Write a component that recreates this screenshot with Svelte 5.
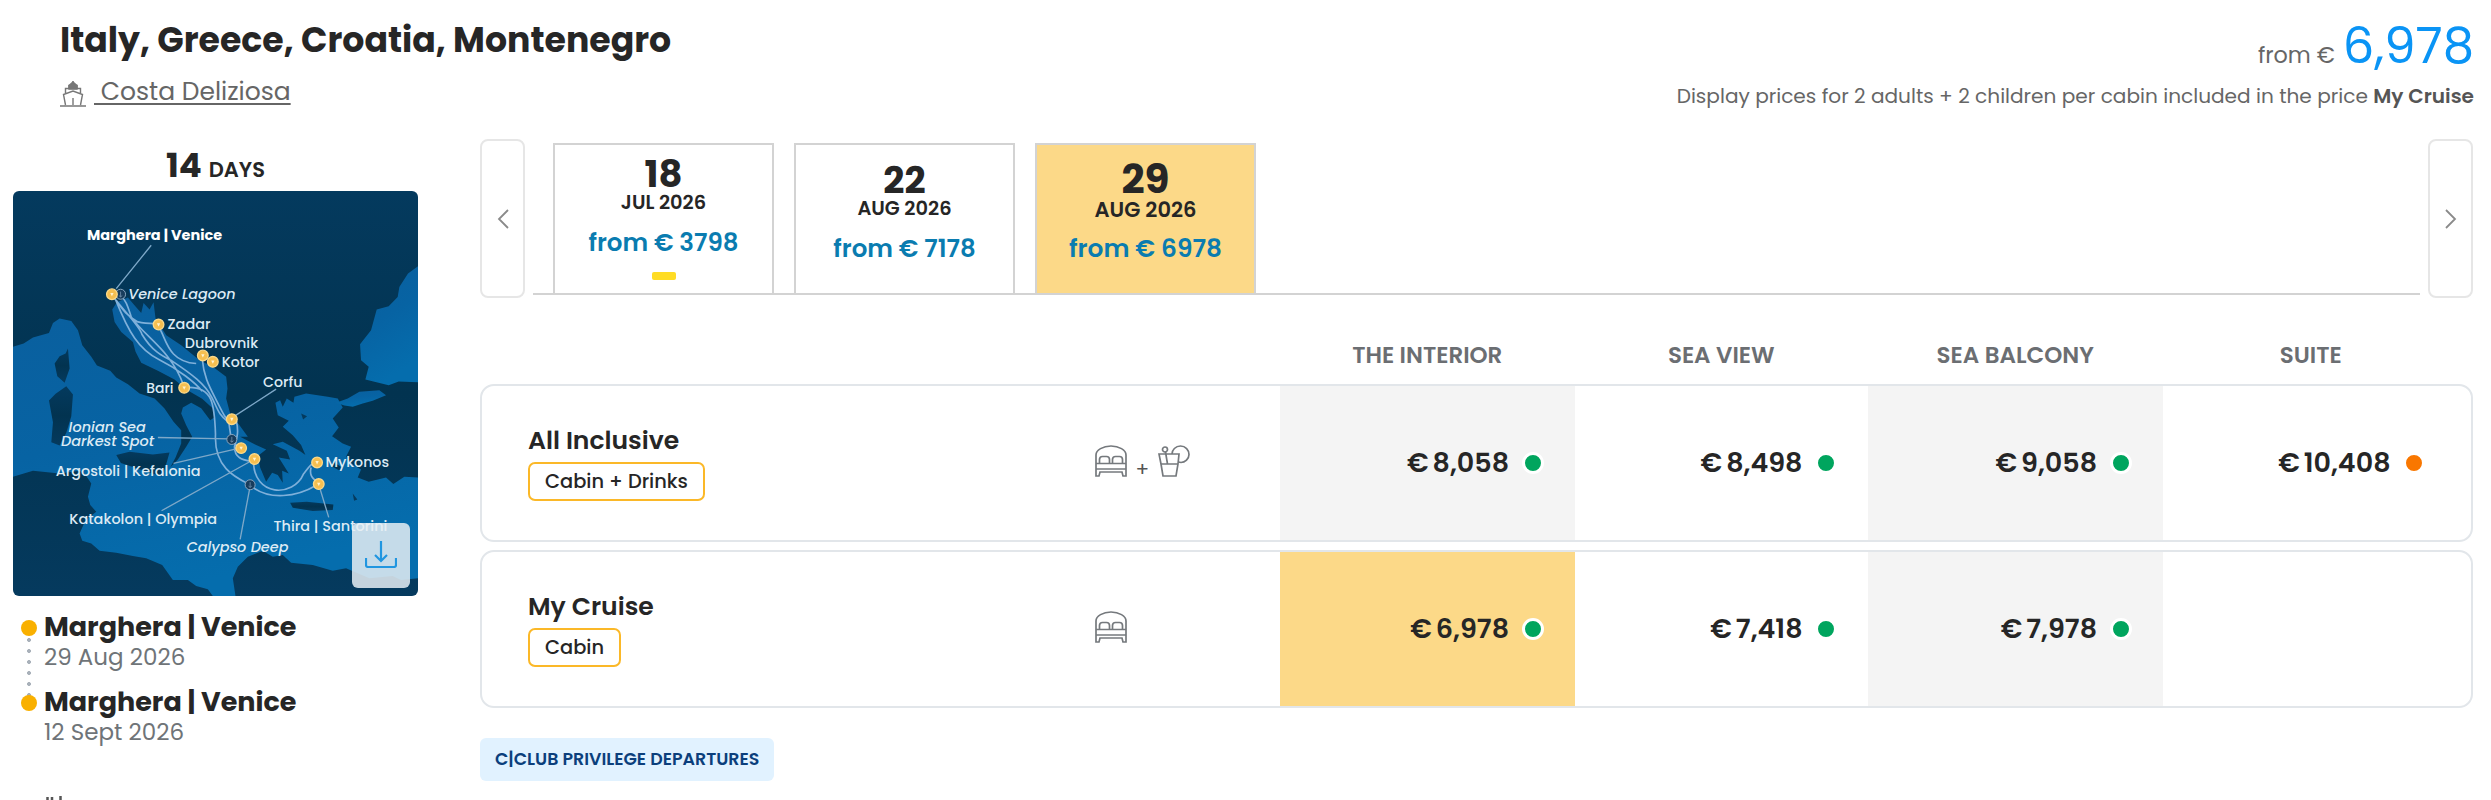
<script lang="ts">
	type Price = { amount: string; status: 'high' | 'low'; selected?: boolean } | null;

	const dates = [
		{ day: '18', month: 'JUL 2026', price: 'from € 3798', promo: true },
		{ day: '22', month: 'AUG 2026', price: 'from € 7178' },
		{ day: '29', month: 'AUG 2026', price: 'from € 6978', selected: true },
	];

	const categories = ['THE INTERIOR', 'SEA VIEW', 'SEA BALCONY', 'SUITE'];

	const fares: { name: string; badge: string; drinks?: boolean; prices: Price[] }[] = [
		{
			name: 'All Inclusive',
			badge: 'Cabin + Drinks',
			drinks: true,
			prices: [
				{ amount: '8,058', status: 'high' },
				{ amount: '8,498', status: 'high' },
				{ amount: '9,058', status: 'high' },
				{ amount: '10,408', status: 'low' },
			],
		},
		{
			name: 'My Cruise',
			badge: 'Cabin',
			prices: [
				{ amount: '6,978', status: 'high', selected: true },
				{ amount: '7,418', status: 'high' },
				{ amount: '7,978', status: 'high' },
				null,
			],
		},
	];

	const stops = [
		{ port: 'Marghera | Venice', date: '29 Aug 2026' },
		{ port: 'Marghera | Venice', date: '12 Sept 2026' },
	];

	const labels = [
		{ text: 'Marghera | Venice', x: 262, y: 179, w: 406, kind: 'bold' },
		{ text: 'Venice Lagoon', x: 386, y: 355, w: 322, kind: 'sea' },
		{ text: 'Zadar', x: 504, y: 446, w: 129 },
		{ text: 'Dubrovnik', x: 556, y: 504, w: 220 },
		{ text: 'Kotor', x: 667, y: 559, w: 113 },
		{ text: 'Bari', x: 440, y: 638, w: 82 },
		{ text: 'Corfu', x: 791, y: 621, w: 118 },
		{ text: 'Ionian Sea', x: 207, y: 755, w: 232, kind: 'sea' },
		{ text: 'Darkest Spot', x: 184, y: 799, w: 280, kind: 'sea' },
		{ text: 'Argostoli | Kefalonia', x: 168, y: 888, w: 435 },
		{ text: 'Mykonos', x: 978, y: 860, w: 191 },
		{ text: 'Katakolon | Olympia', x: 209, y: 1033, w: 444 },
		{ text: 'Thira | Santorini', x: 822, y: 1052, w: 342 },
		{ text: 'Calypso Deep', x: 561, y: 1117, w: 306, kind: 'sea' },
	];

	const ports = [
		[337, 342],
		[477, 433],
		[610, 526],
		[640, 545],
		[554, 623],
		[697, 717],
		[725, 804],
		[765, 837],
		[953, 847],
		[958, 912],
	];

	const seaPoints = [
		[363, 342],
		[697, 778],
		[752, 914],
	];
</script>

{#snippet bed()}
	<svg class="icon" viewBox="0 0 32 32" width="32" height="32">
		<path d="M1 31V10C1 5 8 1 16 1s15 4 15 9v21h-3l-1-4H5l-1 4zM1 18.500h30M1 24h30M4.500 18.500v-4c0-2 1-3 3-3h4c2 0 3 1 3 3v4M17.500 18.500v-4c0-2 1-3 3-3h4c2 0 3 1 3 3v4" />
	</svg>
{/snippet}

{#snippet drink()}
	<svg class="icon" viewBox="0 0 32 32" width="32" height="32">
		<path d="M1 9h20l-1 10-2 12H5L3 19zM3 19h17M9.500 19l-2-12" />
		<circle cx="7" cy="4.500" r="2.500" />
		<path d="M14 9c0-4 3.500-8 8.500-8s8.500 4 8.500 8.500-4 8-8 8l-2.500-.5" />
	</svg>
{/snippet}

<div class="page">
	<header>
		<div class="heading">
			<h1>Italy, Greece, Croatia, Montenegro</h1>
			<div class="ship">
				<svg viewBox="0 0 26 26" width="26" height="26">
					<path d="M13 0v5M9 7V4.500h8V7M5.500 12V7.500h15V12M5.500 24 3.500 13.500 13 10l9.500 3.500L20.500 24M0 25h26M13 17v7" />
					<path class="fill" d="m13 1 4 3.500V8H9V4.500z" />
				</svg>
				<a href="#ship">&nbsp;Costa Deliziosa</a>
			</div>
		</div>
		<div class="total">
			<div class="from"><span>from €</span> <strong>6,978</strong></div>
			<p>Display prices for 2 adults + 2 children per cabin included in the price <b>My Cruise</b></p>
		</div>
	</header>

	<div class="content">
		<aside>
			<div class="days"><strong>14</strong> <span>DAYS</span></div>

			<div class="map">
				<svg viewBox="40 32 1216 1216" width="405" height="405">
					<defs>
						<linearGradient id="sea" x1="0" y1="0" x2="0.3" y2="1">
							<stop offset="0" stop-color="#0a5f9e" />
							<stop offset="0.5" stop-color="#0763a3" />
							<stop offset="1" stop-color="#056dad" />
						</linearGradient>
						<linearGradient id="land" x1="0" y1="0" x2="0" y2="1">
							<stop offset="0" stop-color="#043a5e" />
							<stop offset="0.5" stop-color="#023350" />
							<stop offset="1" stop-color="#053a5e" />
						</linearGradient>
					</defs>
					<rect x="40" y="32" width="1216" height="1216" fill="url(#land)" />
					<g fill="url(#sea)">
						<path
							d="M40 500L72 490L100 472L148 458L160 428L180 415L215 422L235 450L248 495L275 530L292 556L332 572
							L350 592L385 612L420 640L465 655L495 685L522 725L545 750L545 790L528 832L512 862L535 838L560 800L578 770
							L560 735L545 700L550 682L575 668L605 684L632 720L644 712L640 685L608 656L560 628L525 598L475 572L425 548
							L408 515L400 485L365 455L345 425L338 388L352 366L385 352L402 372L425 398L432 368L450 388L462 366L468 415
							L500 465L545 495L600 540L640 560L680 590L684 625L680 655L692 700L720 735L745 770L722 770L770 795L800 808
							L775 828L782 862L800 905L818 878L835 885L850 908L848 872L868 880L838 832L872 838L862 812L820 792L850 785
							L900 812L918 825L905 795L880 765L850 740L868 722L835 705L828 668L842 660L850 680L862 655L882 668L885 650
							L920 640L985 650L1015 655L1030 682L1000 715L1018 742L998 768L1030 790L1055 800L1040 830L1062 855L1085 868
							L1075 892L1108 905L1160 892L1182 912L1215 890L1256 892L1256 1195L1205 1200L1180 1188L1110 1195L1040 1165
							L1000 1172L940 1155L875 1148L850 1125L820 1130L790 1112L745 1130L715 1160L700 1195L708 1248L640 1248
							L625 1228L590 1218L565 1200L520 1200L488 1155L440 1135L400 1128L350 1118L300 1112L275 1090L248 1082L240 1060
							L258 1020L290 995L272 975L265 950L275 910L258 885L240 872L180 880L100 872L40 890z"
						/>
						<path d="M1256 258L1226 280L1200 320L1195 350L1168 378L1132 388L1115 450L1082 492L1085 540L1108 560L1098 598L1168 615L1198 604L1256 606z" />
						<path d="M1010 668L1045 655L1080 635L1140 630L1160 645L1120 662L1090 670L1060 680L1035 676z" />
					</g>
					<g fill="url(#land)">
						<path d="M205 505l5 60-15 43-22-20-8-38 15-22 18-8z" />
						<path d="M200 618l20 25-5 65-15 50-20 38-25-10 5-60-12-65 20-20z" />
						<path d="M350 825l40-10 70 8 50-6-12 42-12 30-50-16-72-24z" />
						<path d="M872 968l50-3 80 8-2 17-60 3-60-10z" />
						<path d="M1000 845l30 18-10 8-22-12zM905 700l18 8-12 10zM1060 940l14 18-10 4z" />
					</g>
					<g class="route">
						<path d="M342 352c50 60 80 90 85 110 30 50 60 65 90 80 60 40 100 70 120 110 20 40 20 50 45 70M365 350c15 10 20 30 30 60 40 60 120 100 157 205M350 360c20 30 35 50 65 65 20 5 40 5 50 5M480 445c20 30 25 100 110 105M608 535c5 60 25 90 50 140 15 30 20 40 35 50M560 622c80-5 85 50 88 140-5 100 60 130 100 150 60 55 150 35 200 5M710 720c10 40 0 60-5 80 0 40 35 40 55 45M762 842c0 110 120 110 150 40 15-20 25-35 40-35M935 862c-5 20 0 30 20 45M348 358c40 100 70 150 130 180 60 30 110 70 130 95M685 715c10 30 0 60 30 85" />
						<path class="pointer" d="M455 195L350 325M830 627L705 708M475 772l215 4M522 850l195-45M486 992l270-150M722 1078l30-160M988 1012l-28-92" />
					</g>
					{#each seaPoints as [x, y]}
						<circle cx={x} cy={y} r="15" fill="#173c5c" stroke="#88a5be" stroke-width="3" />
						<path d="M{x} {y - 8}v16M{x - 5} {y + 4}q5 8 10 0" fill="none" stroke="#88a5be" stroke-width="2" />
					{/each}
					{#each ports as [x, y]}
						<circle cx={x} cy={y} r="16" fill="#f6bf50" stroke="#fbd98a" stroke-width="4" />
						<path d="M{x - 5} {y - 4}h10l-5 10z" fill="#fff3d0" />
					{/each}
					{#each labels as l}
						<text class={l.kind} x={l.x} y={l.y} textLength={l.w} lengthAdjust="spacingAndGlyphs">{l.text}</text>
					{/each}
				</svg>
				<button class="download" aria-label="Download">
					<svg viewBox="0 0 32 28" width="32" height="28">
						<path d="M16 1v20M10 15l6 6 6-6M1 18v7c0 1.500.5 2 2 2h26c1.500 0 2-.5 2-2v-7" />
					</svg>
				</button>
			</div>

			<ol class="stops">
				{#each stops as stop}
					<li>
						<strong>{stop.port}</strong>
						<span>{stop.date}</span>
					</li>
				{/each}
			</ol>
			<svg class="more" viewBox="0 0 16 8" width="16" height="8">
				<path d="M1.500 1v7M6 1v7M14.500 0v8" />
			</svg>
		</aside>

		<main>
			<div class="selector">
				<button class="arrow" aria-label="Previous">
					<svg viewBox="0 0 12 20" width="12" height="20"><path d="M11 1L2 10l9 9" /></svg>
				</button>
				<div class="dates">
					{#each dates as d}
						<div class="date" class:selected={d.selected} class:promo={d.promo}>
							<strong>{d.day}</strong>
							<span class="month">{d.month}</span>
							<span class="price">{d.price}</span>
							{#if d.promo}<i></i>{/if}
						</div>
					{/each}
				</div>
				<button class="arrow" aria-label="Next">
					<svg viewBox="0 0 12 20" width="12" height="20"><path d="M1 1l9 9-9 9" /></svg>
				</button>
			</div>

			<div class="grid head">
				<span></span>
				{#each categories as category}
					<span>{category}</span>
				{/each}
			</div>

			{#each fares as fare}
				<div class="grid fare">
					<div class="info">
						<div class="name">
							<h2>{fare.name}</h2>
							<span class="badge">{fare.badge}</span>
						</div>
						<div class="includes">
							{@render bed()}
							{#if fare.drinks}
								<span>+</span>
								{@render drink()}
							{/if}
						</div>
					</div>
					{#each fare.prices as price}
						<div class="cell" class:selected={price?.selected}>
							{#if price}
								<span class="amount"><span>€</span>{price.amount}</span>
								<span class="dot {price.status}"></span>
							{/if}
						</div>
					{/each}
				</div>
			{/each}

			<div class="club">C|CLUB PRIVILEGE DEPARTURES</div>
		</main>
	</div>
</div>

<style>
	:global(body) {
		margin: 0;
		background: #fff;
	}

	.page {
		height: 800px;
		overflow: hidden;
		font-family: Poppins, Inter, 'Liberation Sans', sans-serif;
		color: #262626;
	}

	h1, h2, p, ol {
		margin: 0;
		padding: 0;
	}

	button {
		padding: 0;
		font: inherit;
	}

	svg {
		display: block;
		fill: none;
	}

	header {
		box-sizing: border-box;
		height: 139px;
		padding: 20px 17px 0 60px;
		display: flex;
		justify-content: space-between;
	}

	h1 {
		font-size: 34.7px;
		line-height: 40px;
		font-weight: 700;
	}

	.ship {
		display: flex;
		align-items: center;
		gap: 8px;
		height: 30px;
		margin-top: 17px;
	}

	.ship svg {
		stroke: #777;
		stroke-width: 1.4;
		margin-top: 3px;
	}

	.ship .fill {
		fill: #777;
	}

	.ship a {
		font-size: 25px;
		line-height: 30px;
		color: #666;
		text-underline-offset: 3px;
		text-decoration-thickness: 2px;
	}

	.total {
		margin-top: -4px;
		text-align: right;
		color: #666;
	}

	.from {
		display: flex;
		justify-content: flex-end;
		align-items: baseline;
		gap: 8px;
		height: 60px;
		line-height: 60px;
		font-size: 22.3px;
	}

	.from strong {
		font-size: 49.7px;
		font-weight: 400;
		color: #0a94f5;
	}

	.total p {
		margin-top: 10px;
		font-size: 20.1px;
		line-height: 20px;
	}

	.total b {
		font-weight: 600;
		color: #555;
	}

	.content {
		display: flex;
		gap: 62px;
		padding: 0 18px 0 13px;
	}

	aside {
		width: 405px;
		flex: none;
		padding-top: 6px;
	}

	.days {
		display: flex;
		justify-content: center;
		align-items: baseline;
		gap: 7px;
		height: 46px;
		line-height: 41px;
		font-size: 21px;
		font-weight: 600;
	}

	.days strong {
		font-size: 34px;
		font-weight: 700;
	}

	.map {
		position: relative;
		height: 405px;
		border-radius: 6px;
		overflow: hidden;
	}

	.map text {
		font-size: 40px;
		font-weight: 500;
		fill: #dceaf4;
	}

	.map text.bold {
		font-weight: 700;
		fill: #fff;
	}

	.map text.sea {
		font-style: italic;
	}

	.route {
		stroke: #7fb0da;
		stroke-width: 5;
	}

	.route .pointer {
		stroke: #7ea8c8;
		stroke-width: 4;
	}

	.download {
		position: absolute;
		right: 8px;
		bottom: 8px;
		width: 58px;
		height: 65px;
		display: flex;
		align-items: center;
		justify-content: center;
		border: 0;
		border-radius: 6px;
		background: rgba(232, 238, 243, 0.85);
	}

	.download svg {
		stroke: #2196e0;
		stroke-width: 2.2;
		margin-top: -4px;
	}

	.stops {
		position: relative;
		margin: 15px 0 0 7px;
		list-style: none;
	}

	/* dotted line joining the two ports */
	.stops::before {
		content: '';
		position: absolute;
		left: 7px;
		top: 27px;
		width: 4px;
		height: 60px;
		background: radial-gradient(circle at 2px 2px, #a9b1ba 1.8px, transparent 2.2px) 0 0 / 4px 11px;
	}

	.stops li {
		position: relative;
		height: 75px;
		padding-left: 24px;
		display: flex;
		flex-direction: column;
	}

	.stops li::before {
		content: '';
		position: absolute;
		left: 1px;
		top: 9px;
		width: 16px;
		height: 16px;
		border-radius: 50%;
		background: #f9b000;
	}

	.stops strong {
		font-size: 27px;
		line-height: 32px;
		font-weight: 700;
	}

	.stops span {
		font-size: 23px;
		line-height: 29px;
		color: #6f7478;
	}

	.more {
		margin: 35px 0 0 33px;
		stroke: #555;
		stroke-width: 2.5;
	}

	main {
		flex: 1;
		min-width: 0;
	}

	.selector {
		display: flex;
		height: 159px;
	}

	.arrow {
		box-sizing: border-box;
		width: 45px;
		flex: none;
		display: flex;
		align-items: center;
		justify-content: center;
		border: 2px solid #e6e6e6;
		border-radius: 8px;
		background: #fff;
	}

	.arrow svg {
		stroke: #8a8a8a;
		stroke-width: 1.8;
	}

	.dates {
		flex: 1;
		display: flex;
		gap: 20px;
		margin: 4px 8px 0;
		padding-left: 20px;
		border-bottom: 2px solid #d3d3d3;
		box-sizing: border-box;
		height: 152px;
	}

	.date {
		box-sizing: border-box;
		width: 221px;
		padding-top: 20px;
		display: flex;
		flex-direction: column;
		align-items: center;
		border: 2px solid #d3d3d3;
		border-bottom: 0;
	}

	.date.promo {
		padding-top: 14px;
	}

	.date.selected {
		background: #fcd988;
	}

	.date strong {
		font-size: 37px;
		line-height: 30px;
		font-weight: 700;
	}

	.date .month {
		margin-top: 1px;
		font-size: 19.4px;
		line-height: 26px;
		font-weight: 600;
	}

	.date .price {
		margin-top: 11px;
		font-size: 24.5px;
		line-height: 32px;
		font-weight: 600;
		color: #0a7cb0;
	}

	.date.selected strong {
		margin-top: -1px;
		font-size: 40.5px;
	}

	.date.selected .month {
		margin-top: 3px;
		font-size: 21px;
	}

	.date.selected .price {
		margin-top: 10px;
		font-size: 24.8px;
	}

	.date i {
		width: 24px;
		height: 8px;
		margin-top: 13px;
		border-radius: 2px;
		background: #ffdc24;
	}

	.grid {
		display: grid;
		grid-template-columns: 798px 294.5px 293.5px 294.5px 1fr;
	}

	.head {
		box-sizing: border-box;
		height: 86px;
		padding: 42px 14px 0 2px;
		font-size: 23px;
		line-height: 30px;
		font-weight: 600;
		text-align: center;
		color: #6b6e72;
	}

	.fare {
		box-sizing: border-box;
		height: 158px;
		margin-bottom: 8px;
		border: 2px solid #e2e6ea;
		border-radius: 14px;
		overflow: hidden;
	}

	.info {
		display: flex;
		align-items: center;
		padding-left: 46px;
	}

	.name {
		width: 567px;
		padding-bottom: 2px;
	}

	.name h2 {
		font-size: 25.1px;
		line-height: 36px;
		font-weight: 600;
	}

	.badge {
		display: inline-block;
		box-sizing: border-box;
		height: 39px;
		margin-top: 3px;
		padding: 0 15px;
		border: 2px solid #fbb828;
		border-radius: 7px;
		font-size: 19.4px;
		line-height: 36px;
		font-weight: 500;
	}

	.includes {
		display: flex;
		align-items: center;
		gap: 8.5px;
		color: #555;
		font-size: 20px;
	}

	.includes span {
		line-height: 20px;
		padding-top: 11px;
	}

	.icon {
		stroke: #75797d;
		stroke-width: 1.7;
		margin-top: -4px;
	}

	.cell {
		display: flex;
		align-items: center;
		justify-content: flex-end;
		padding-right: 31px;
	}

	.cell:nth-child(even) {
		background: #f4f4f4;
	}

	.cell:last-child {
		padding-right: 46px;
	}

	.cell.selected {
		background: #fcd988;
	}

	.amount {
		font-size: 27px;
		font-weight: 600;
	}

	.amount span {
		margin-right: 4px;
	}

	.dot {
		width: 16px;
		height: 16px;
		margin-left: 12.5px;
		border: 3px solid #fff;
		border-radius: 50%;
		background: #00a55e;
	}

	.dot.low {
		background: #f97700;
	}

	.club {
		display: inline-block;
		margin-top: 22px;
		padding: 0 15px;
		border-radius: 6px;
		background: #e1f2ff;
		font-size: 17.4px;
		line-height: 43px;
		font-weight: 600;
		color: #0b3f7c;
	}
</style>
